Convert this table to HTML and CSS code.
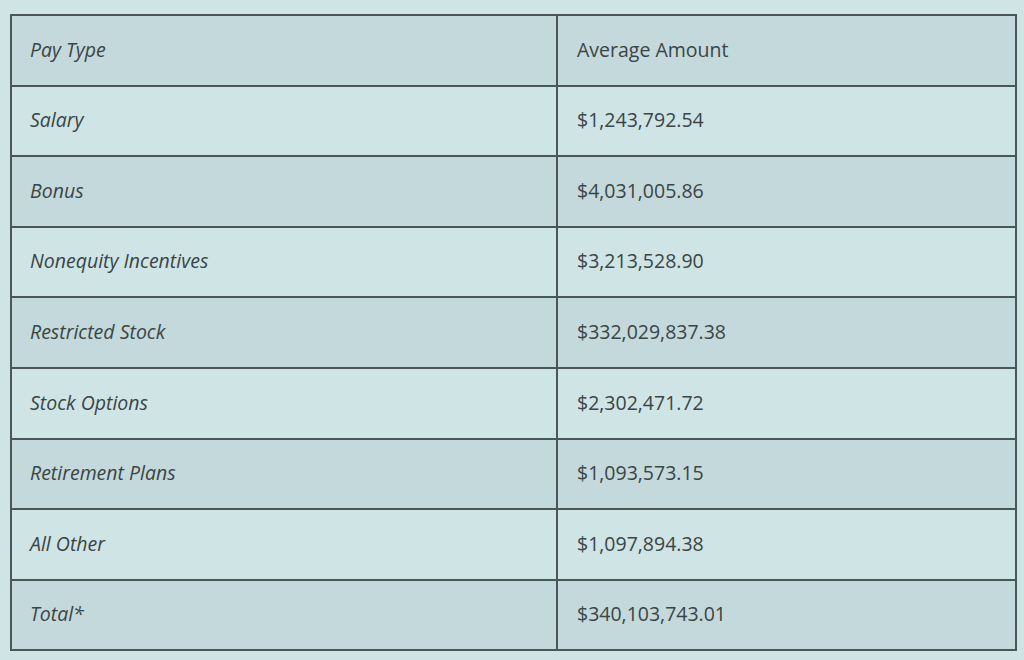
FILE: index.html
```html
<!DOCTYPE html>
<html>
<head>
<meta charset="utf-8">
<link rel="stylesheet" href="styles.css">
</head>
<body>
<table class="pay">
  <thead>
    <tr class="shade"><th class="type">Pay Type</th><th class="amt">Average Amount</th></tr>
  </thead>
  <tbody>
    <tr><td class="type">Salary</td><td class="amt">$1,243,792.54</td></tr>
    <tr class="shade"><td class="type">Bonus</td><td class="amt">$4,031,005.86</td></tr>
    <tr><td class="type">Nonequity Incentives</td><td class="amt">$3,213,528.90</td></tr>
    <tr class="shade"><td class="type">Restricted Stock</td><td class="amt">$332,029,837.38</td></tr>
    <tr><td class="type">Stock Options</td><td class="amt">$2,302,471.72</td></tr>
    <tr class="shade"><td class="type">Retirement Plans</td><td class="amt">$1,093,573.15</td></tr>
    <tr><td class="type">All Other</td><td class="amt">$1,097,894.38</td></tr>
    <tr class="shade"><td class="type">Total*</td><td class="amt">$340,103,743.01</td></tr>
  </tbody>
</table>
</body>
</html>
```
FILE: styles.css
```css
html, body {
  margin: 0;
  padding: 0;
  background: #cfe4e5;
}
body {
  padding: 14px 8px 0 10px;
  font-family: "Open Sans", "Noto Sans", sans-serif;
  color: #3a4545;
}
.pay {
  border-collapse: collapse;
  width: 1007px;
  border: 2px solid #434f4f;
}
.pay th, .pay td {
  border: 2px solid #4a5757;
  height: 70.6px;
  padding: 0 0 2px 19px;
  text-align: left;
  font-size: 19.5px;
  font-weight: 400;
  vertical-align: middle;
  box-sizing: border-box;
  line-height: 1;
}
.pay .type {
  width: 546px;
  padding-left: 18px;
  font-style: italic;
}
.pay .shade th, .pay .shade td {
  background: #c4d9db;
}
```
